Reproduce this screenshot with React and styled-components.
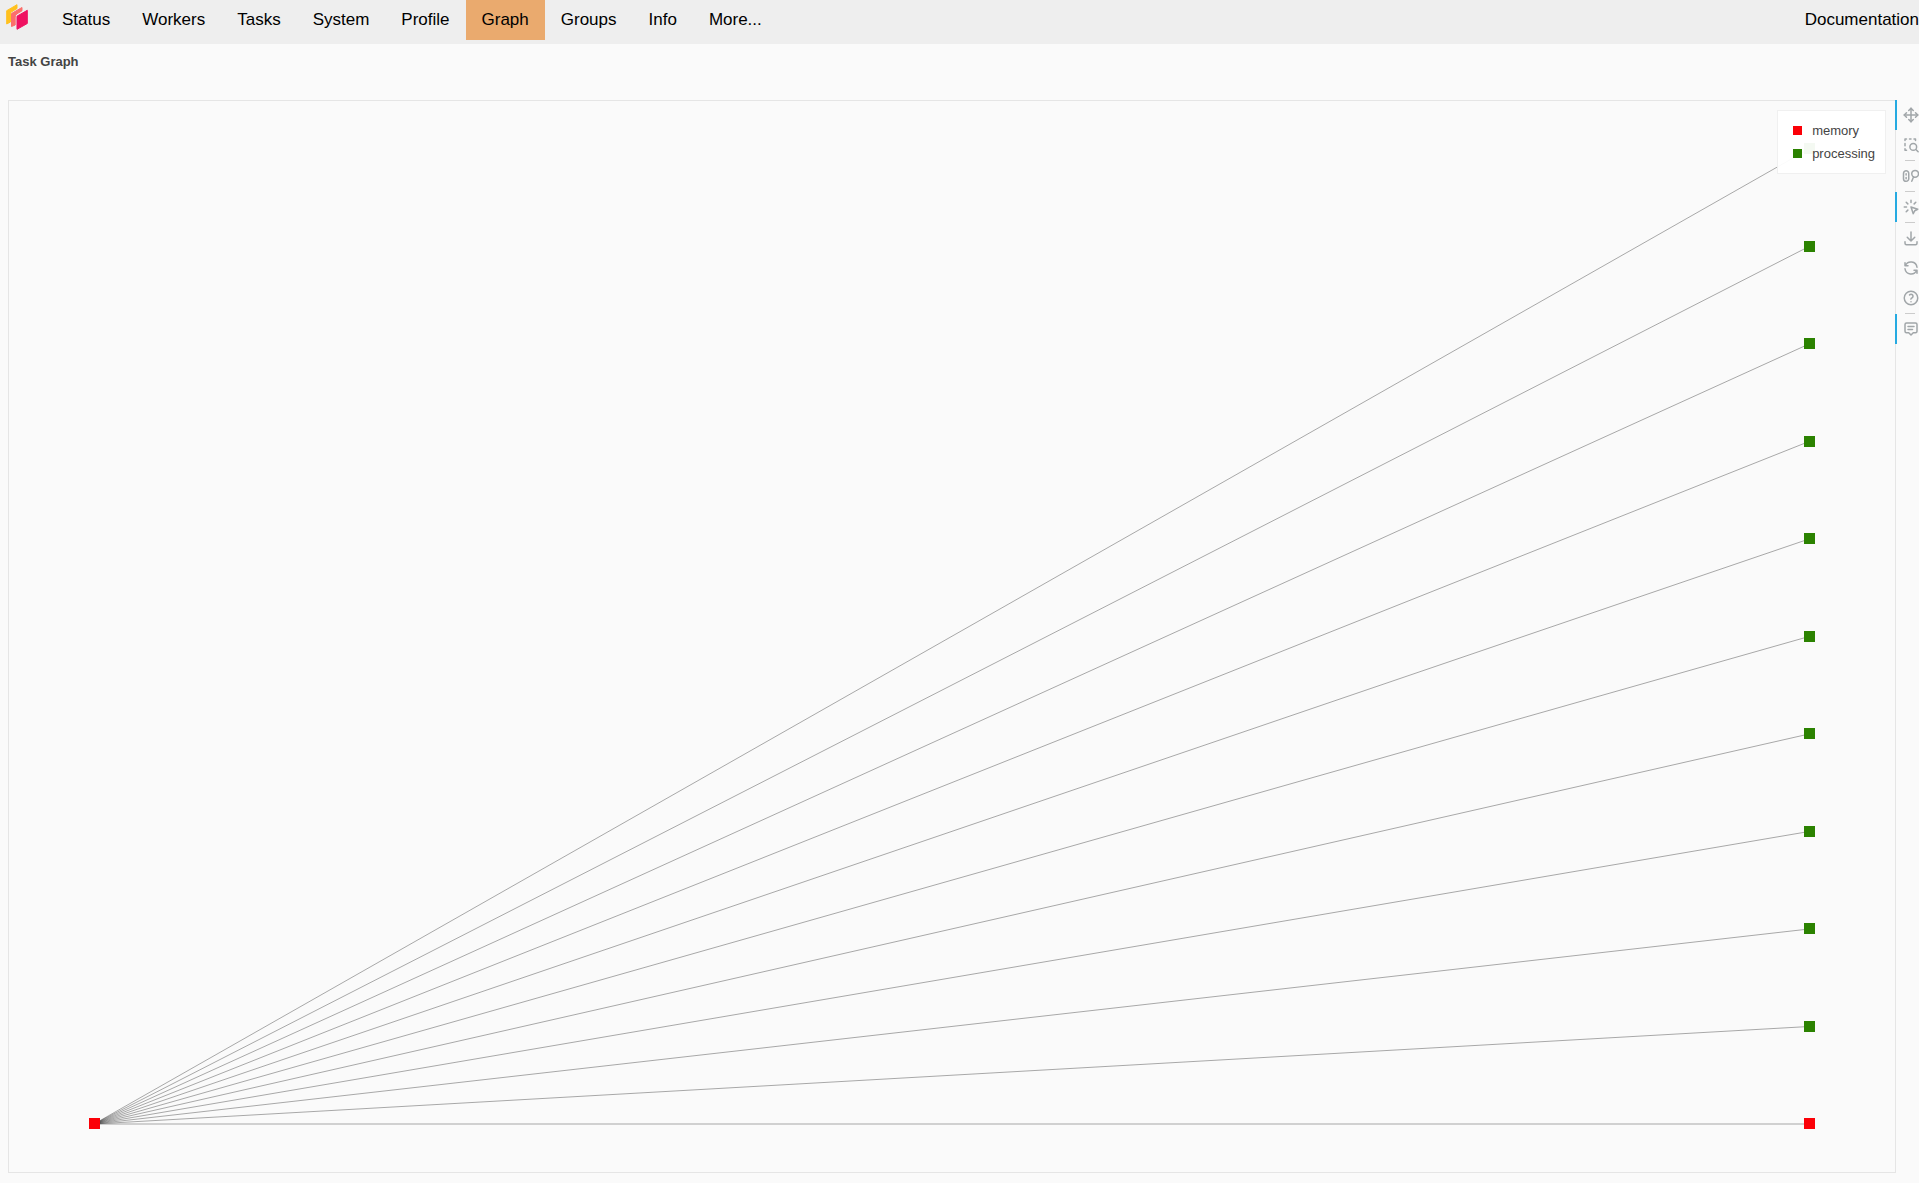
import React from "react";
import styled, { createGlobalStyle } from "styled-components";

const GlobalStyle = createGlobalStyle`
  *, *::before, *::after { box-sizing: border-box; }
  body {
    margin: 0;
    background: #fafafa;
    color: #444;
    font-family: "Liberation Sans", Arial, Helvetica, sans-serif;
    overflow-x: hidden;
  }
`;

const Header = styled.header`
  display: flex;
  align-items: flex-start;
  height: 44px;
  background: #eee;
`;

const LogoLink = styled.a`
  display: flex;
  padding: 4px 0 0 6px;
  width: 46px;
`;

const NavList = styled.nav`
  display: flex;
  flex: 1;
`;

const NavLink = styled.a`
  padding: 10px 16px;
  font-size: 17px;
  line-height: 20px;
  color: #000;
  text-decoration: none;
  background: ${(p) => (p.$active ? "#eaaa6e" : "transparent")};
`;

const DocsLink = styled(NavLink)`
  padding-right: 0;
`;

const Main = styled.main`
  padding: 10px 0 10px 8px;
`;

const Title = styled.h1`
  margin: 0 0 30px;
  font-size: 13px;
  line-height: 16px;
  font-weight: bold;
`;

const Figure = styled.div`
  display: flex;
  align-items: stretch;
`;

const Plot = styled.div`
  position: relative;
  flex: 1;
  min-width: 0;
  border: 1px solid #e5e5e5;
`;

const Canvas = styled.svg`
  display: block;
  width: 100%;
  height: auto;
`;

const Legend = styled.ul`
  position: absolute;
  top: 9px;
  right: 9px;
  margin: 0;
  padding: 8px 10px 8px 15px;
  list-style: none;
  border: 1px solid #f0f0f0;
  background: rgba(255, 255, 255, 0.95);
`;

const LegendItem = styled.li`
  display: flex;
  align-items: center;
  gap: 10px;
  font-size: 13px;
  line-height: 23px;
`;

const Swatch = styled.span`
  width: 9px;
  height: 9px;
  background: ${(p) => p.$color};
`;

const Toolbar = styled.div`
  position: relative;
  flex: none;
  width: 24px;
  margin-left: -1px;
  overflow: hidden;
`;

const ToolButton = styled.button`
  display: flex;
  align-items: center;
  justify-content: center;
  width: 30px;
  height: 30px;
  padding: 0;
  border: 0;
  border-left: 2px solid ${(p) => (p.$active ? "#26aae1" : "transparent")};
  background: none;
  color: #a1a6a9;
`;

const Divider = styled.hr`
  width: 10px;
  height: 1px;
  margin: 0 0 0 10px;
  border: 0;
  background: #ccc;
`;

const GREEN = "#2b8200";
const RED = "#fb0007";
const SOURCE = { x: 85, y: 1023 };
const TARGET_X = 1800;
const TARGETS = Array.from({ length: 11 }, (_, i) => ({
  y: 1023 - i * 97.5,
  color: i === 0 ? RED : GREEN,
}));

const NAV = ["Status", "Workers", "Tasks", "System", "Profile", "Graph", "Groups", "Info", "More..."];

const TOOLS = [
  {
    name: "Pan",
    active: true,
    paths: ["M12 3v18M3 12h18", "M9 6l3-3 3 3M9 18l3 3 3-3M6 9l-3 3 3 3M18 9l3 3-3 3"],
  },
  {
    name: "Box Zoom",
    paths: ["M4 6V4h2M10 4h2M16 4h2v2M4 10v3M4 17v2h2", "M15 10a4.500 4.500 0 1 0 0 9a4.500 4.500 0 0 0 0-9M18.500 18l3 3"],
    divider: true,
  },
  {
    name: "Wheel Zoom",
    paths: [
      "M5.500 5a3.500 3.500 0 0 1 3.500 3.500v7a3.500 3.500 0 0 1-7 0v-7a3.500 3.500 0 0 1 3.500-3.500M5.500 9v1.500M5.500 14v1.500",
      "M17.500 4.500a4.500 4.500 0 1 0 0 9a4.500 4.500 0 0 0 0-9M15.500 13l-2.500 6",
    ],
    divider: true,
  },
  {
    name: "Tap",
    active: true,
    paths: [
      "M3 12h3M12 3v3M7.800 7.800l-2.200-2.200M16.200 7.800l2.200-2.200M7.800 16.200l-2.200 2.200",
      "M12 12l9 3-4 2-2 4-3-9",
    ],
    divider: true,
  },
  { name: "Save", paths: ["M4 17v2a2 2 0 0 0 2 2h12a2 2 0 0 0 2-2v-2", "M7 11l5 5 5-5M12 4v12"] },
  {
    name: "Reset",
    paths: ["M20 11a8.100 8.100 0 0 0-15.500-2M4 5v4h4", "M4 13a8.100 8.100 0 0 0 15.500 2M20 19v-4h-4"],
  },
  {
    name: "Help",
    paths: [
      "M12 3a9 9 0 1 0 0 18a9 9 0 0 0 0-18",
      "M12 17v.010M12 13.500a1.500 1.500 0 0 1 1-1.500a2.600 2.600 0 1 0-3-4",
    ],
    divider: true,
  },
  {
    name: "Hover",
    active: true,
    paths: ["M6 4h12a2 2 0 0 1 2 2v9a2 2 0 0 1-2 2h-3l-3 3-3-3H6a2 2 0 0 1-2-2V6a2 2 0 0 1 2-2", "M8 8.500h8M8 12.500h6"],
  },
];

function DaskLogo() {
  return (
    <svg width="22" height="26" viewBox="0 0 22 26" aria-hidden="true" strokeLinejoin="round">
      <path d="M.7 6.700 11 .7v3.800L6 7.500q-1.500 1-1.500 2.500v8L.7 20z" fill="#ffc11e" stroke="#ffc11e" />
      <path d="M5.500 9.500 16 3.500v3.300L11 9.800Q9.200 11 9.200 13v8L5.500 22.500z" fill="#fc6e6b" stroke="#fc6e6b" />
      <path d="M11 12.200 21.300 6.300v13.200L11 25.300z" fill="#ef1161" stroke="#ef1161" />
    </svg>
  );
}

function ToolIcon({ paths }) {
  return (
    <svg
      width="18"
      height="18"
      viewBox="0 0 24 24"
      fill="none"
      stroke="currentColor"
      strokeWidth="2"
      strokeLinecap="round"
      strokeLinejoin="round"
      aria-hidden="true"
    >
      {paths.map((d) => (
        <path key={d} d={d} />
      ))}
    </svg>
  );
}

function TaskGraph() {
  return (
    <Canvas viewBox="0 0 1886 1071" role="img" aria-label="Task graph">
      {TARGETS.map((t) => (
        <line key={t.y} x1={SOURCE.x} y1={SOURCE.y} x2={TARGET_X} y2={t.y} stroke="#000" strokeOpacity="0.33" />
      ))}
      <rect x={SOURCE.x - 5} y={SOURCE.y - 6} width="11" height="11" fill={RED} />
      {TARGETS.map((t) => (
        <rect key={t.y} x={TARGET_X - 5} y={Math.round(t.y) - 6} width="11" height="11" fill={t.color} />
      ))}
    </Canvas>
  );
}

export default function App() {
  return (
    <>
      <GlobalStyle />
      <Header>
        <LogoLink href="#" aria-label="Dask">
          <DaskLogo />
        </LogoLink>
        <NavList>
          {NAV.map((label) => (
            <NavLink key={label} href="#" $active={label === "Graph"}>
              {label}
            </NavLink>
          ))}
        </NavList>
        <DocsLink href="#">Documentation</DocsLink>
      </Header>
      <Main>
        <Title>Task Graph</Title>
        <Figure>
          <Plot>
            <TaskGraph />
            <Legend>
              <LegendItem>
                <Swatch $color={RED} />
                memory
              </LegendItem>
              <LegendItem>
                <Swatch $color={GREEN} />
                processing
              </LegendItem>
            </Legend>
          </Plot>
          <Toolbar role="toolbar" aria-label="Plot tools">
            {TOOLS.map((tool) => (
              <React.Fragment key={tool.name}>
                <ToolButton type="button" aria-label={tool.name} $active={tool.active}>
                  <ToolIcon paths={tool.paths} />
                </ToolButton>
                {tool.divider && <Divider />}
              </React.Fragment>
            ))}
          </Toolbar>
        </Figure>
      </Main>
    </>
  );
}
